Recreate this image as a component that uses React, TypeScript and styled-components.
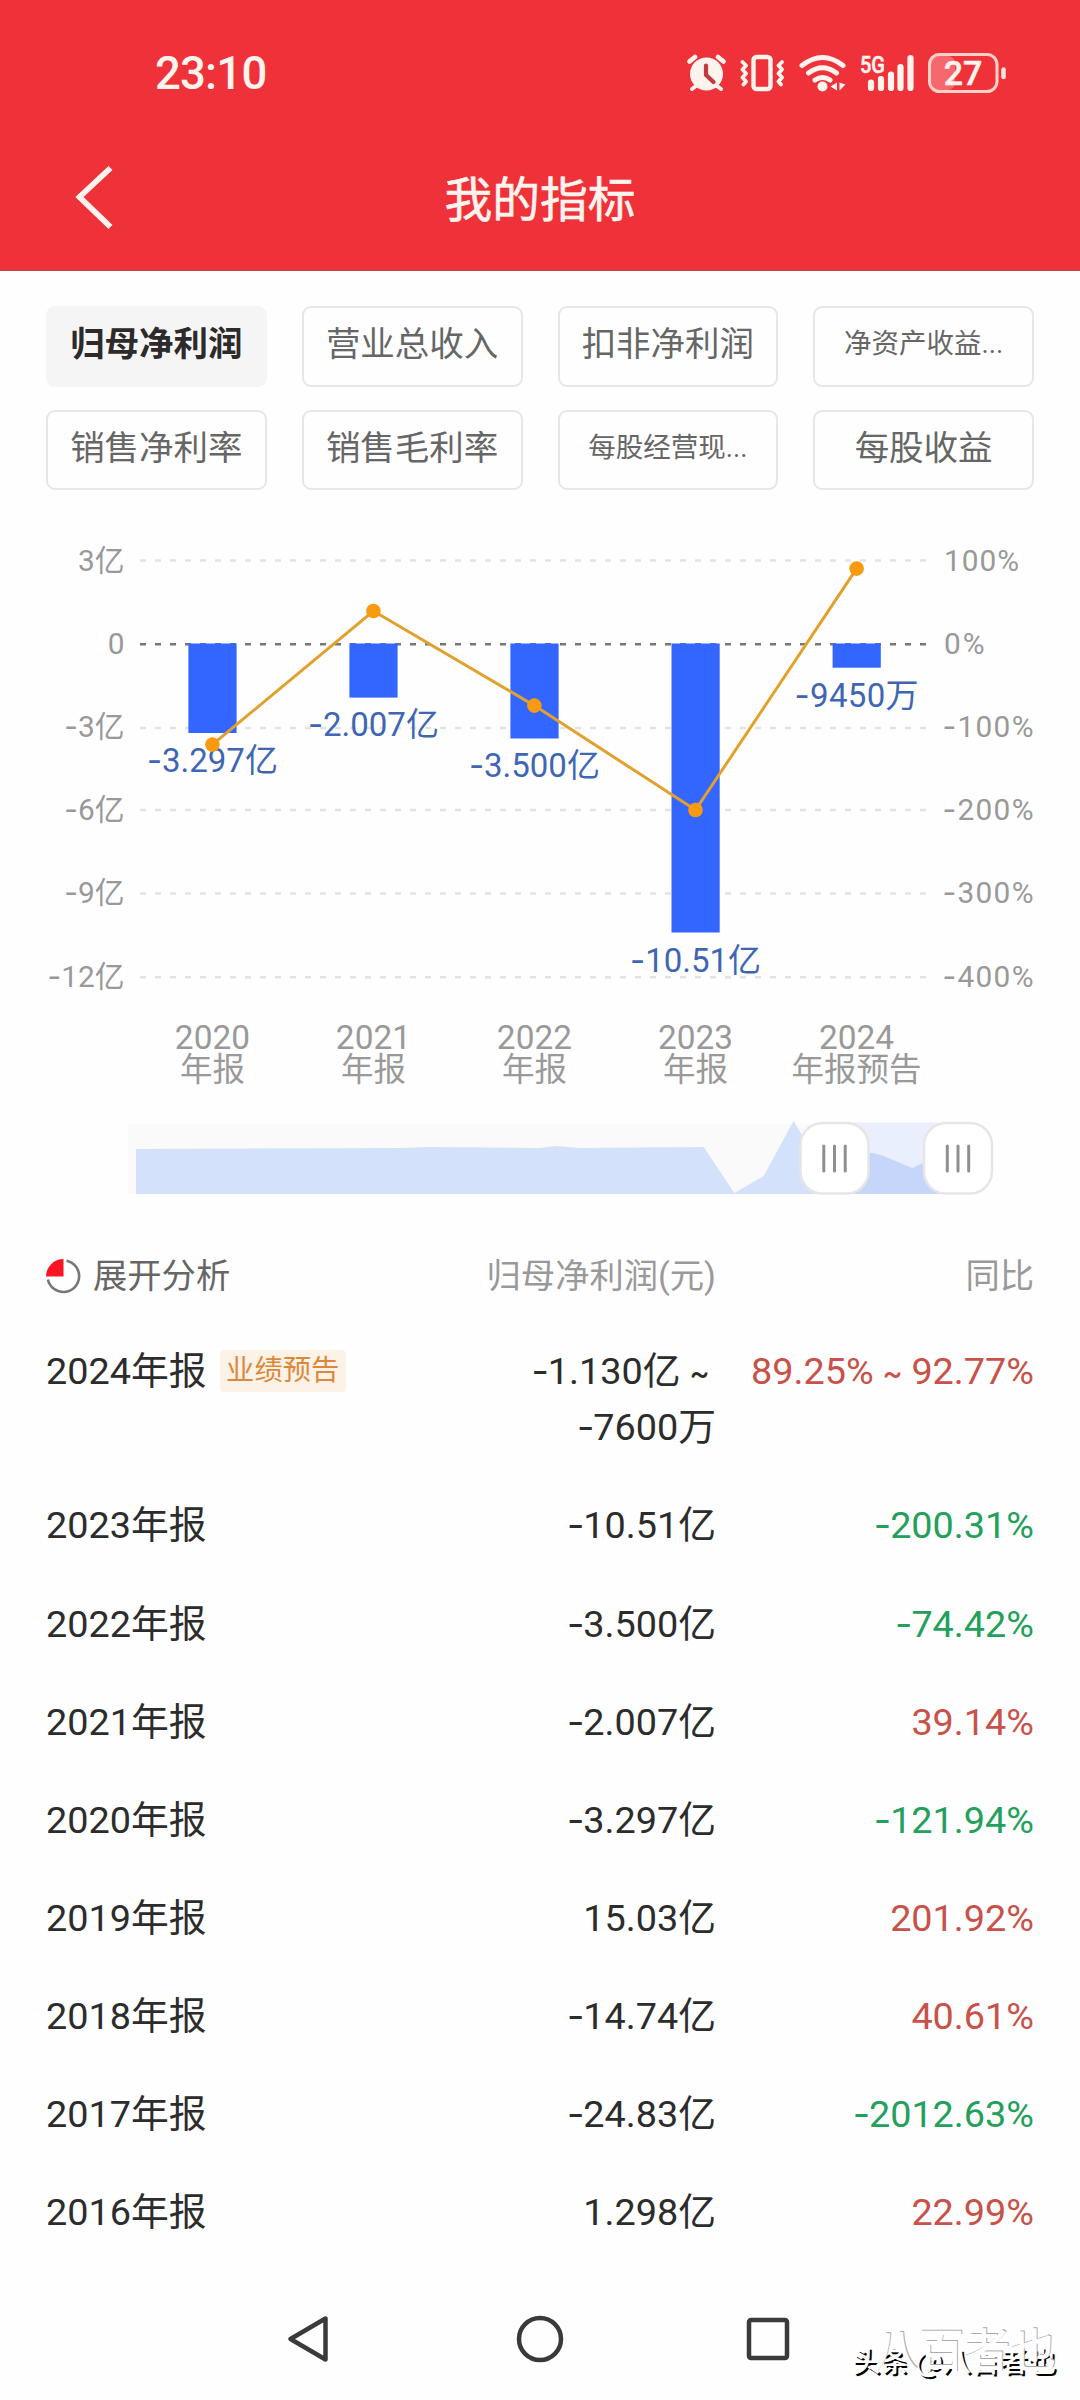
import React from 'react';
import styled, { createGlobalStyle } from 'styled-components';

const FONT = 'Roboto, "Noto Sans CJK SC", sans-serif';

const GlobalStyle = createGlobalStyle`
  * { box-sizing: border-box; }
  body { margin: 0; background: #fefefe; }
`;

const Page = styled.div`
  position: relative;
  display: flex;
  flex-direction: column;
  width: 1080px;
  height: 2400px;
  overflow: hidden;
  background: #fefefe;
  color: #2c2c2c;
  font-family: ${FONT};
`;

const Header = styled.header`
  display: flex;
  flex: none;
  flex-direction: column;
  height: 271px;
  background: #ef3139;
  border-bottom: 1px solid #b9474a;
  color: #fff3ee;
`;

const StatusBar = styled.div`
  display: flex;
  align-items: center;
  justify-content: space-between;
  height: 146px;
  padding: 0 72px 0 155px;
`;

const Clock = styled.span`
  padding-top: 2px;
  font-size: 45.5px;
  font-weight: 500;
  line-height: 60px;
  letter-spacing: -0.8px;
`;

const TitleBar = styled.div`
  display: grid;
  grid-template-columns: 200px 1fr 200px;
  align-items: center;
  height: 104px;
`;

const BackButton = styled.button`
  display: flex;
  padding: 0 0 3px 71px;
  border: 0;
  background: none;
`;

const Title = styled.h1`
  margin: 5px 0 0;
  font-size: 47.8px;
  font-weight: 400;
  line-height: 60px;
  text-align: center;
  -webkit-text-stroke: 0.6px currentColor;
`;

const Tabs = styled.div`
  display: grid;
  flex: none;
  grid-template-columns: repeat(4, 1fr);
  grid-auto-rows: 80.5px;
  gap: 23px 35px;
  padding: 35px 46px 20px;
`;

const Tab = styled.button<{ $active?: boolean; $small?: boolean }>`
  display: flex;
  align-items: center;
  justify-content: center;
  padding: 0 0 4px;
  border: 2.5px solid ${(p) => (p.$active ? '#f6f5f6' : '#e7e7e7')};
  border-radius: 9px;
  background: ${(p) => (p.$active ? '#f6f5f6' : 'transparent')};
  color: ${(p) => (p.$active ? '#2c2a2b' : '#666')};
  font-family: ${FONT};
  font-size: ${(p) => (p.$small ? 27.5 : 34.5)}px;
  font-weight: ${(p) => (p.$active ? 700 : 400)};
  line-height: 44px;
  white-space: nowrap;
`;

const ChartSvg = styled.svg`
  display: block;
  flex: none;
  font-family: ${FONT};
`;

const Minus = styled.span`
  margin-right: -0.03em;
  font-family: Inter, sans-serif;
  line-height: 1;
`;

const Tilde = styled.span`
  font-size: 0.76em;
  font-weight: 500;
  line-height: 1;
`;

const Table = styled.section`
  display: flex;
  flex: none;
  flex-direction: column;
  padding: 0 46px;
`;

const HeadRow = styled.div`
  display: grid;
  grid-template-columns: 300px 370px 1fr;
  align-items: center;
  height: 93.4px;
  color: #999;
  font-size: 34.3px;
  line-height: 50px;
`;

const Expand = styled.div`
  display: flex;
  align-items: center;
  gap: 11px;
  color: #666;
`;

const Row = styled.div`
  display: grid;
  grid-template-columns: 300px 370px 1fr;
  align-items: start;
  padding: 21px 0 21.1px;
  font-size: 37.8px;
  line-height: 56px;
`;

const Period = styled.div`
  display: flex;
  align-items: center;
  gap: 13px;
  white-space: nowrap;
`;

const Badge = styled.span`
  padding: 0 6.5px;
  border-radius: 4px;
  background: #fdf2e8;
  color: #db8938;
  font-size: 28.3px;
  line-height: 42px;
`;

const Cell = styled.div<{ $tone?: 'up' | 'down' | 'muted' }>`
  color: ${(p) =>
    p.$tone === 'up' ? '#c8524a' : p.$tone === 'down' ? '#23a05c' : p.$tone === 'muted' ? '#999' : '#2c2c2c'};
  text-align: right;
  white-space: nowrap;
`;

const ValueLine = styled.div<{ $continued?: boolean }>`
  height: 56px;
  padding-right: ${(p) => (p.$continued ? 7 : 0)}px;
`;

const NavBar = styled.nav`
  display: grid;
  flex: none;
  grid-template-columns: 248px 214px 242px;
  justify-content: center;
  justify-items: center;
  align-items: center;
  height: 138px;
  padding: 17px 6px 0 0;
`;

const Watermark = styled.div`
  position: absolute;
  right: 24px;
  bottom: 20px;
  display: grid;
  justify-items: end;
  color: #fefefe;
  font-family: "Noto Sans CJK SC", sans-serif;
  font-weight: 500;
  white-space: nowrap;
  pointer-events: none;
`;

const MarkSmall = styled.span`
  grid-area: 1 / 1;
  align-self: end;
  font-size: 28.3px;
  line-height: 40px;
  text-shadow: 2px 2px 0 #000;
`;

const MarkLarge = styled.span`
  grid-area: 1 / 1;
  align-self: end;
  padding-bottom: 5px;
  font-size: 46px;
  line-height: 56px;
  text-shadow: 1px -1px 0 #aaa;
`;

function Num({ children }: { children: string }) {
  const negative = children.startsWith('-');
  const parts = (negative ? children.slice(1) : children).split('~');
  return (
    <>
      {negative && <Minus>-</Minus>}
      {parts[0]}
      {parts.length > 1 && <Tilde>~</Tilde>}
      {parts[1]}
    </>
  );
}

function StatusIcons() {
  return (
    <svg width="322" height="44" viewBox="686 51 322 44" fill="none" stroke="#fff3ee" strokeLinecap="round" strokeLinejoin="round">
      <g>
        <circle cx="706.5" cy="74" r="16.5" fill="#fff3ee" stroke="none" />
        <path d="M689.500 61.500l5.500-4.500M723.500 61.500l-5.500-4.500" strokeWidth="4.800" />
        <path d="M696 86l-4 3M717 86l4 3" strokeWidth="4" />
        <path d="M706 65.500v9.500l7.500 7" stroke="#c23a3f" strokeWidth="4.200" />
      </g>
      <g>
        <rect x="753.500" y="57" width="17" height="32" rx="3" strokeWidth="4.400" />
        <path d="M742.500 62l3.500 3.500-3.500 4 3.500 4-3.500 4 3.500 4-2.500 3M782 62l-3.500 3.500 3.500 4-3.500 4 3.500 4-3.500 4 2.500 3" strokeWidth="3.800" />
      </g>
      <g strokeWidth="5">
        <path d="M802 65.500q20.500-16 41 0" />
        <path d="M808.500 73q14-10.500 28 0" />
        <path d="M815 80q7.500-5 15 0" />
        <circle cx="822.500" cy="86.500" r="5" fill="#fff3ee" stroke="none" />
        <path d="M837 82.500v8l-6.500-4zM839.500 82.500v8l6-6z" fill="#fff3ee" stroke="none" />
      </g>
      <text x="860" y="72.500" fill="#fff3ee" stroke="#fff3ee" strokeWidth="0.500" fontFamily="Roboto, sans-serif" fontSize="23.500" fontWeight="500" textLength="25" lengthAdjust="spacingAndGlyphs">5G</text>
      <path d="M871 82.500v5.500M881 79v9M891 74.500v13.500M900.500 67v21M910.500 58v30" strokeWidth="6.200" />
      <rect x="930" y="56" width="25" height="34" rx="7" fill="#f5686b" stroke="none" />
      <rect x="929.500" y="54.500" width="67.500" height="37" rx="10" stroke="#ffd0c6" strokeWidth="3" />
      <path d="M1003.500 69.500v7.500" stroke="#ffe4dc" strokeWidth="4.500" />
      <text x="963" y="85" fill="#fff3ee" stroke="#fff3ee" strokeWidth="0.500" fontFamily="Roboto, sans-serif" fontSize="34" fontWeight="500" textAnchor="middle">27</text>
    </svg>
  );
}

const tabs: { label: string; active?: boolean; small?: boolean }[] = [
  { label: '归母净利润', active: true },
  { label: '营业总收入' },
  { label: '扣非净利润' },
  { label: '净资产收益...', small: true },
  { label: '销售净利率' },
  { label: '销售毛利率' },
  { label: '每股经营现...', small: true },
  { label: '每股收益' },
];

const gridLines = [
  { y: 560.5, left: '3亿', right: '100%' },
  { y: 644.3, left: '0', right: '0%' },
  { y: 728, left: '-3亿', right: '-100%' },
  { y: 810, left: '-6亿', right: '-200%' },
  { y: 893.5, left: '-9亿', right: '-300%' },
  { y: 977.3, left: '-12亿', right: '-400%' },
];

const bars = [
  { x: 212.4, bottom: 733, label: '-3.297亿', base: 772, width: 131, line: 744.6, year: '2020', kind: '年报' },
  { x: 373.4, bottom: 697.6, label: '-2.007亿', base: 735.6, width: 131, line: 611, year: '2021', kind: '年报' },
  { x: 534.4, bottom: 738.5, label: '-3.500亿', base: 777.4, width: 131, line: 705.6, year: '2022', kind: '年报' },
  { x: 695.5, bottom: 932.5, label: '-10.51亿', base: 972, width: 131, line: 810, year: '2023', kind: '年报' },
  { x: 856.6, bottom: 667.7, label: '-9450万', base: 707.3, width: 124, line: 568.6, year: '2024', kind: '年报预告' },
];

function SvgNum({ children }: { children: string }) {
  return children.startsWith('-') ? (
    <>
      <tspan fontFamily="Inter, sans-serif">-</tspan>
      {children.slice(1)}
    </>
  ) : (
    <>{children}</>
  );
}

function Handle({ x }: { x: number }) {
  return (
    <g>
      <rect x={x - 34} y="1123" width="68" height="70.5" rx="22" fill="#fff" stroke="#e6e6e6" strokeWidth="2.500" />
      <path d={`M${x - 10.7} 1146v25M${x} 1146v25M${x + 10.7} 1146v25`} stroke="#8f8f8f" strokeWidth="3" strokeLinecap="round" />
    </g>
  );
}

function Chart() {
  return (
    <ChartSvg width="1080" height="719" viewBox="0 510 1080 719">
      {gridLines.map((g, i) => (
        <line key={g.y} x1="140" x2="928" y1={g.y} y2={g.y} stroke={i === 1 ? '#777' : '#e3e3e3'} strokeWidth="2.500" strokeDasharray="6 9" />
      ))}
      <g fill="#999" fontSize="29.800">
        {gridLines.map((g, i) => (
          <g key={g.y}>
            <text x="124.500" y={570.6 + i * 83.2} textAnchor="end"><SvgNum>{g.left}</SvgNum></text>
            <text
              x={g.right.startsWith('-') ? 942.5 : 944}
              y={570.6 + i * 83.2}
              textLength={g.right.startsWith('-') ? 91 : g.right.length > 2 ? 75 : 40.500}
            >
              <SvgNum>{g.right}</SvgNum>
            </text>
          </g>
        ))}
      </g>
      {bars.map((b) => (
        <rect key={b.year} x={b.x - 24} y="643.500" width="48.200" height={b.bottom - 643.5} fill="#3366ff" />
      ))}
      <g fill="#3f66b4" fontSize="33" textAnchor="middle">
        {bars.map((b) => (
          <text key={b.year} x={b.x} y={b.base} textLength={b.width}><SvgNum>{b.label}</SvgNum></text>
        ))}
      </g>
      <polyline points={bars.map((b) => `${b.x},${b.line}`).join(' ')} fill="none" stroke="#e2a02c" strokeWidth="3" />
      {bars.map((b) => (
        <circle key={b.year} cx={b.x} cy={b.line} r="7.300" fill="#fa9a10" />
      ))}
      <g fill="#999" textAnchor="middle">
        {bars.map((b) => (
          <g key={b.year}>
            <text x={b.x} y="1049" fontSize="33.400">{b.year}</text>
            <text x={b.x} y="1081" fontSize="32.500">{b.kind}</text>
          </g>
        ))}
      </g>
      <rect x="128" y="1124" width="706" height="70" fill="#fafafa" />
      <path d="M136 1194V1149L400 1148L430 1147L540 1148L556 1146L580 1148L703.700 1147L734.300 1193L763.700 1176L793.500 1121L834 1187V1194Z" fill="#d3e1fa" />
      <rect x="834" y="1122.500" width="124" height="71.500" fill="#e9effd" />
      <path d="M834 1194V1153H873L884 1156L912 1168L923 1163L958 1150V1194Z" fill="#c6d6fa" />
      <Handle x={834.5} />
      <Handle x={958} />
    </ChartSvg>
  );
}

type Tone = 'up' | 'down';

const rows: { year: string; badge?: string; values: string[]; change: string; tone: Tone }[] = [
  { year: '2024', badge: '业绩预告', values: ['-1.130亿 ~', '-7600万'], change: '89.25% ~ 92.77%', tone: 'up' },
  { year: '2023', values: ['-10.51亿'], change: '-200.31%', tone: 'down' },
  { year: '2022', values: ['-3.500亿'], change: '-74.42%', tone: 'down' },
  { year: '2021', values: ['-2.007亿'], change: '39.14%', tone: 'up' },
  { year: '2020', values: ['-3.297亿'], change: '-121.94%', tone: 'down' },
  { year: '2019', values: ['15.03亿'], change: '201.92%', tone: 'up' },
  { year: '2018', values: ['-14.74亿'], change: '40.61%', tone: 'up' },
  { year: '2017', values: ['-24.83亿'], change: '-2012.63%', tone: 'down' },
  { year: '2016', values: ['1.298亿'], change: '22.99%', tone: 'up' },
];

export default function App() {
  return (
    <Page>
      <GlobalStyle />
      <Header>
        <StatusBar>
          <Clock>23:10</Clock>
          <StatusIcons />
        </StatusBar>
        <TitleBar>
          <BackButton aria-label="返回">
            <svg width="46" height="68" viewBox="72 162 46 68" fill="none" stroke="#fff3ee" strokeWidth="5.800">
              <path d="M111.500 167L80.500 196L111.500 226" />
            </svg>
          </BackButton>
          <Title>我的指标</Title>
        </TitleBar>
      </Header>
      <Tabs>
        {tabs.map((t) => (
          <Tab key={t.label} $active={t.active} $small={t.small}>
            {t.label}
          </Tab>
        ))}
      </Tabs>
      <Chart />
      <Table>
        <HeadRow>
          <Expand>
            <svg width="36" height="36" viewBox="0 0 36 36">
              <path d="M17.500 18.500V1A17.500 17.500 0 0 0 0 18.500Z" fill="#fb1524" />
              <path d="M20.500 2.700A15.800 15.800 0 1 1 1.900 21.500" fill="none" stroke="#777" strokeWidth="2.600" />
            </svg>
            展开分析
          </Expand>
          <Cell $tone="muted">归母净利润(元)</Cell>
          <Cell $tone="muted">同比</Cell>
        </HeadRow>
        {rows.map((r) => (
          <Row key={r.year}>
            <Period>
              {r.year}年报
              {r.badge && <Badge>{r.badge}</Badge>}
            </Period>
            <Cell>
              {r.values.map((v) => (
                <ValueLine key={v} $continued={v.endsWith('~')}>
                  <Num>{v}</Num>
                </ValueLine>
              ))}
            </Cell>
            <Cell $tone={r.tone}>
              <Num>{r.change}</Num>
            </Cell>
          </Row>
        ))}
      </Table>
      <NavBar>
        <svg width="46" height="52" viewBox="-1 -3 46 52" fill="none" stroke="#3a3a3a" strokeWidth="4.500" strokeLinejoin="round">
          <path d="M38.500 2.500V43.500L3.500 23Z" />
        </svg>
        <svg width="50" height="50" viewBox="0 0 50 50" fill="none" stroke="#3a3a3a" strokeWidth="4.500">
          <circle cx="25" cy="25" r="21" />
        </svg>
        <svg width="46" height="46" viewBox="0 0 46 46" fill="none" stroke="#3a3a3a" strokeWidth="4.500">
          <rect x="4" y="4" width="38" height="38" rx="2" />
        </svg>
      </NavBar>
      <Watermark>
        <MarkSmall>头条 @八百者也</MarkSmall>
        <MarkLarge>八百者也</MarkLarge>
      </Watermark>
    </Page>
  );
}
